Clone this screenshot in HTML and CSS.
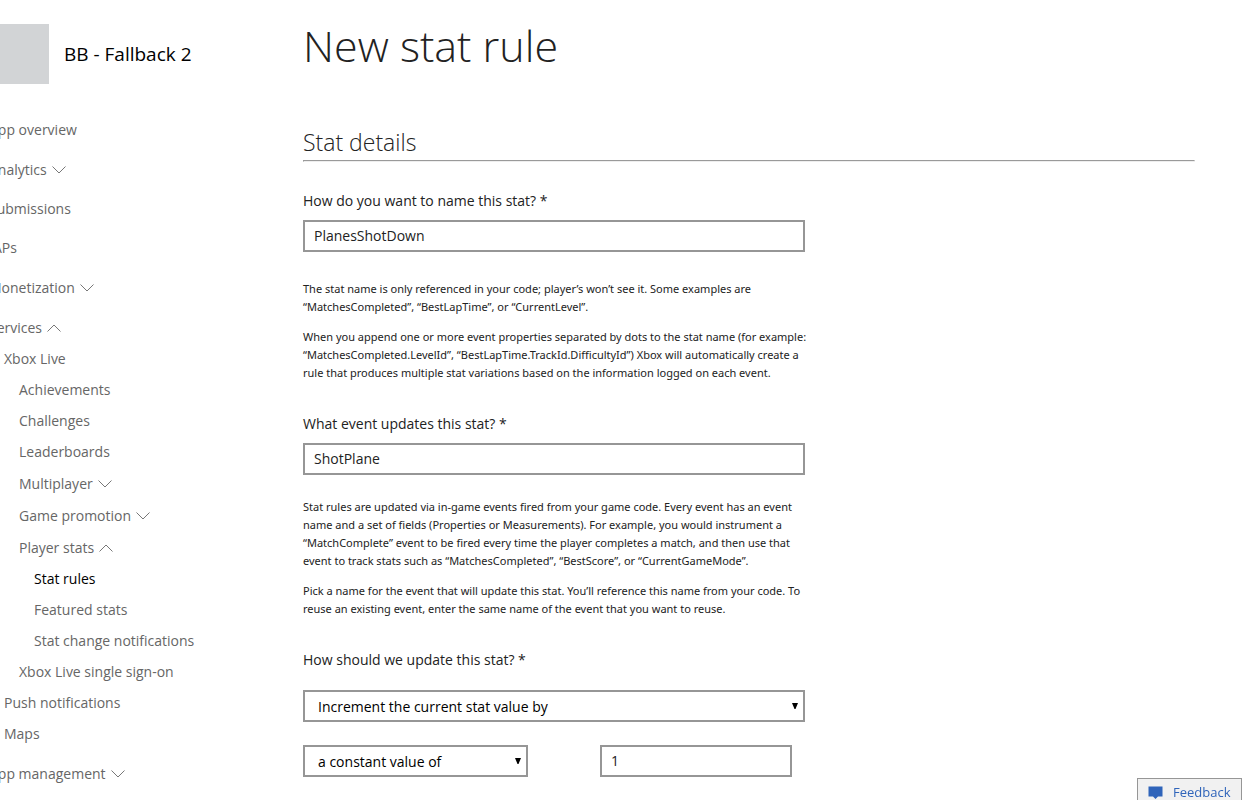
FILE: index.html
```html
<!DOCTYPE html>
<html lang="en">
<head>
<meta charset="utf-8">
<title>New stat rule</title>
<link rel="stylesheet" href="styles.css">
</head>
<body>
<svg class="defs" width="0" height="0" aria-hidden="true">
  <symbol id="down" viewBox="0 0 14 8"><path d="M0.5 0.5 L7 7 L13.5 0.5"/></symbol>
  <symbol id="up" viewBox="0 0 14 8"><path d="M0.5 7.5 L7 1 L13.5 7.5"/></symbol>
</svg>
<div class="page">
  <aside class="sidebar">
    <div class="app">
      <div class="app-logo"></div>
      <div class="app-name">BB - Fallback 2</div>
    </div>
    <nav>
      <ul class="menu">
        <li><a href="#">App overview</a></li>
        <li><a href="#" class="expander">Analytics <svg class="chevron"><use href="#down"/></svg></a></li>
        <li><a href="#">Submissions</a></li>
        <li><a href="#">IAPs</a></li>
        <li><a href="#" class="expander">Monetization <svg class="chevron"><use href="#down"/></svg></a></li>
        <li><a href="#" class="expander">Services <svg class="chevron"><use href="#up"/></svg></a>
          <ul class="submenu">
            <li><a href="#">Xbox Live</a>
              <ul class="submenu">
                <li><a href="#">Achievements</a></li>
                <li><a href="#">Challenges</a></li>
                <li><a href="#">Leaderboards</a></li>
                <li><a href="#" class="expander">Multiplayer <svg class="chevron"><use href="#down"/></svg></a></li>
                <li><a href="#" class="expander">Game promotion <svg class="chevron"><use href="#down"/></svg></a></li>
                <li><a href="#" class="expander">Player stats <svg class="chevron"><use href="#up"/></svg></a>
                  <ul class="submenu">
                    <li><a href="#" class="current">Stat rules</a></li>
                    <li><a href="#">Featured stats</a></li>
                    <li><a href="#">Stat change notifications</a></li>
                  </ul>
                </li>
                <li><a href="#">Xbox Live single sign-on</a></li>
              </ul>
            </li>
            <li><a href="#">Push notifications</a></li>
            <li><a href="#">Maps</a></li>
          </ul>
        </li>
        <li><a href="#" class="expander">App management <svg class="chevron"><use href="#down"/></svg></a></li>
      </ul>
    </nav>
  </aside>
  <main class="content">
    <h1>New stat rule</h1>
    <h2>Stat details</h2>
    <hr>
    <form>
      <div class="field">
        <label for="name">How do you want to name this stat? *</label>
        <input id="name" class="control" type="text" value="PlanesShotDown">
        <div class="help">
          <p>The stat name is only referenced in your code; player’s won’t see it. Some examples are<br>“MatchesCompleted”, “BestLapTime”, or “CurrentLevel”.</p>
          <p>When you append one or more event properties separated by dots to the stat name (for example:<br>“MatchesCompleted.LevelId”, “BestLapTime.TrackId.DifficultyId”) Xbox will automatically create a<br>rule that produces multiple stat variations based on the information logged on each event.</p>
        </div>
      </div>
      <div class="field">
        <label for="event">What event updates this stat? *</label>
        <input id="event" class="control" type="text" value="ShotPlane">
        <div class="help compact">
          <p>Stat rules are updated via in-game events fired from your game code. Every event has an event<br>name and a set of fields (Properties or Measurements). For example, you would instrument a<br>“MatchComplete” event to be fired every time the player completes a match, and then use that<br>event to track stats such as “MatchesCompleted”, “BestScore”, or “CurrentGameMode”.</p>
          <p>Pick a name for the event that will update this stat. You’ll reference this name from your code. To<br>reuse an existing event, enter the same name of the event that you want to reuse.</p>
        </div>
      </div>
      <div class="field update">
        <label for="update">How should we update this stat? *</label>
        <select id="update" class="control"><option>Increment the current stat value by</option></select>
        <div class="amount">
          <select class="control source" aria-label="Value source"><option>a constant value of</option></select>
          <input class="control value" type="text" value="1" aria-label="Value">
        </div>
      </div>
    </form>
  </main>
</div>
<button class="feedback" type="button">
  <svg width="15" height="13" viewBox="0 0 15 13" aria-hidden="true"><path d="M0.5 0.5 H14.5 V10.5 H10 L7.5 13 L5 10.5 H0.5 Z" fill="#2f64ba"/></svg>
  Feedback
</button>
</body>
</html>
```
FILE: styles.css
```css
* {
  box-sizing: border-box;
}

body {
  margin: 0;
  overflow-x: hidden;
  background: #fff;
  color: #222;
  font: 14px/20px "Segoe UI", "Open Sans", "Noto Sans", sans-serif;
}

.defs {
  position: absolute;
}

/* The layout starts slightly past the left edge of the window. */
.page {
  display: flex;
  margin-left: -11px;
  padding-top: 24px;
}

.sidebar {
  flex: 0 0 314px;
}

.app {
  display: flex;
  align-items: center;
  gap: 15px;
  height: 60px;
  margin-bottom: 30px;
}

.app-logo {
  width: 60px;
  height: 60px;
  background: #d2d4d6;
}

.app-name {
  color: #000;
  font-size: 19px;
  line-height: 24px;
}

.menu,
.submenu {
  margin: 0;
  padding: 0;
  list-style: none;
}

.submenu {
  padding-left: 15px;
}

.menu > li + li {
  margin-top: 8px;
}

.menu a {
  display: flex;
  align-items: center;
  gap: 5px;
  height: 31px;
  color: #666;
  text-decoration: none;
}

.menu .expander {
  height: 32px;
  padding-top: 2px;
}

.menu .current {
  color: #000;
}

.chevron {
  width: 14px;
  height: 8px;
  fill: none;
  stroke: #777;
}

.content {
  flex: 1;
  padding-right: 61px;
}

h1,
h2 {
  margin: 0;
  font-weight: 300;
}

h1 {
  font-size: 43px;
  line-height: 44px;
  margin-bottom: 59px;
}

h2 {
  font-size: 23px;
  line-height: 30px;
}

hr {
  margin: 3px 0 29px;
  border: 1px inset #eee;
}

label {
  display: block;
  margin-bottom: 9px;
}

.control {
  display: block;
  width: 502px;
  max-width: 100%;
  height: 32px;
  padding: 0 9px 2px;
  border: 2px solid #969696;
  border-radius: 0;
  background: #fff;
  color: #222;
  font: inherit;
}

select.control {
  appearance: none;
  padding: 1px 13px 0;
  color: #000;
  background: #fff url("data:image/svg+xml,%3Csvg xmlns='http://www.w3.org/2000/svg' width='6' height='6'%3E%3Cpath d='M0 0H6L3.5 6H2.5Z'/%3E%3C/svg%3E") no-repeat right 5px top 11px;
}

.help {
  margin: 28px 0 32px;
  font-family: "Segoe UI", "Noto Sans", "Open Sans", sans-serif;
  font-size: 11px;
  line-height: 18px;
}

.help.compact {
  margin-top: 23px;
}

.help p {
  margin: 0 0 12px;
}

.help p:last-child {
  margin-bottom: 0;
}

.update label {
  margin-bottom: 20px;
}

.amount {
  display: flex;
  gap: 72px;
  margin-top: 23px;
}

.amount .source {
  width: 225px;
}

.amount .value {
  width: 192px;
}

.feedback {
  position: fixed;
  right: 14px;
  bottom: 0;
  display: flex;
  align-items: center;
  gap: 10px;
  width: 105px;
  height: 22px;
  padding: 5px 0 0 10px;
  border: 1px solid #969696;
  border-bottom: 0;
  background: #f1f1f1;
  color: #2f64ba;
  font: 13px/16px "Segoe UI", "Open Sans", "Noto Sans", sans-serif;
}
```
